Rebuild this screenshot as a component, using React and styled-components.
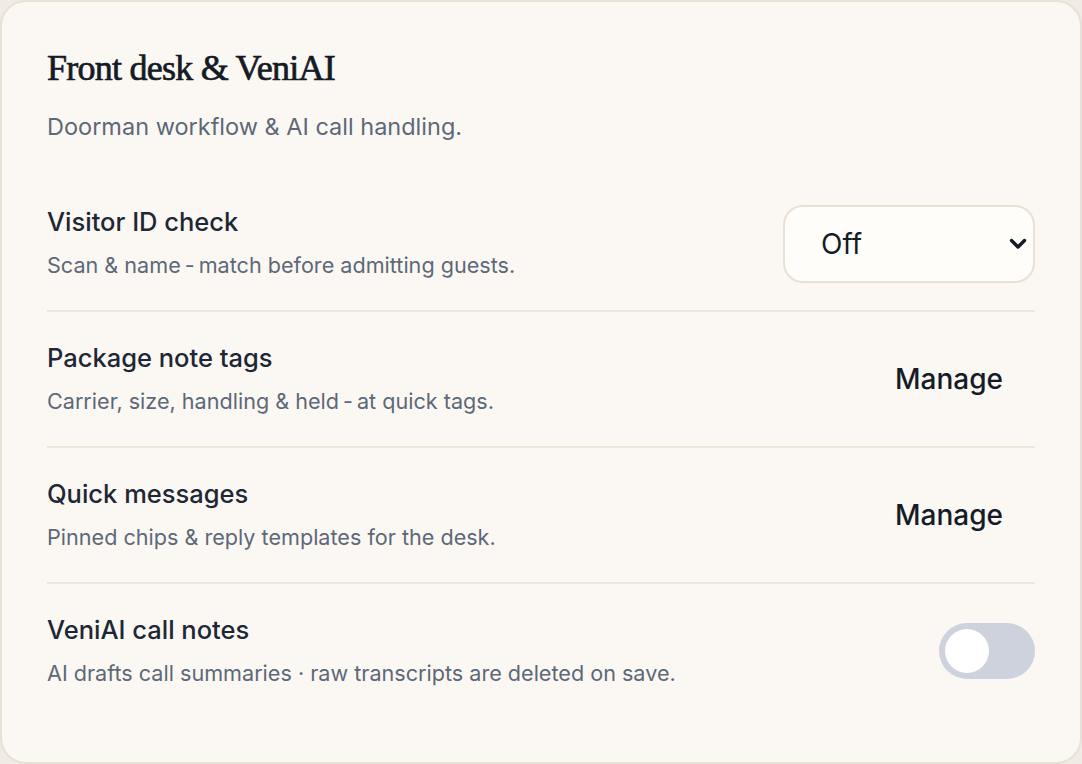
import React, { useState } from "react";
import styled, { createGlobalStyle } from "styled-components";

const Global = createGlobalStyle`
  html, body { margin: 0; padding: 0; background: #f1ece3; }
  body { font-family: Inter, "Noto Sans", sans-serif; -webkit-font-smoothing: antialiased; }
  * { box-sizing: border-box; }
`;

const Card = styled.section`
  width: 1082px;
  height: 764px;
  background: #fbf8f3;
  border: 2px solid #e8e1d5;
  border-radius: 26px;
  padding: 45px 45px 0 45px;
  display: flex;
  flex-direction: column;
`;

const Title = styled.h2`
  margin: 0;
  font-family: "Liberation Serif", "DejaVu Serif", serif;
  font-weight: 400;
  -webkit-text-stroke: 0.7px #141b27;
  font-size: 36px;
  line-height: 42px;
  letter-spacing: -0.75px;
  color: #141b27;
`;

const Subtitle = styled.p`
  margin: 23px 0 0 0;
  font-size: 23.5px;
  line-height: 30px;
  color: #5d6878;
`;

const List = styled.div`
  margin-top: 34px;
  display: flex;
  flex-direction: column;
`;

const Row = styled.div`
  display: flex;
  align-items: center;
  justify-content: space-between;
  padding: 31px 0 31px 0;
  border-bottom: ${(p) => (p.$last ? "none" : "2px solid #ede6db")};
`;

const Info = styled.div`
  display: flex;
  flex-direction: column;
`;

const Label = styled.div`
  font-size: 25.5px;
  font-weight: 500;
  line-height: 30px;
  color: #1e2735;
`;

const Desc = styled.div`
  margin-top: 14px;
  font-size: 21.6px;
  line-height: 28px;
  color: #5d6878;
`;

const Hyphen = styled.span`
  padding: 0 4px;
`;

const SelectWrap = styled.div`
  position: relative;
  width: 252px;
  height: 78px;
  margin: -3px 0 -4px 0;
`;

const Select = styled.select`
  appearance: none;
  -webkit-appearance: none;
  width: 100%;
  height: 100%;
  border: 2px solid #e8e0d3;
  border-radius: 20px;
  background: #fffdf9;
  font-family: Inter, sans-serif;
  font-size: 28px;
  color: #151c28;
  padding: 0 40px 0 36px;
  outline: none;
`;

const Chevron = styled.svg`
  position: absolute;
  right: 8px;
  top: 33px;
  width: 18px;
  height: 12px;
  pointer-events: none;
`;

const ManageButton = styled.button`
  background: transparent;
  border: none;
  font-family: Inter, sans-serif;
  font-size: 28px;
  font-weight: 500;
  color: #151c28;
  padding: 10px 32px 10px 0;
  cursor: pointer;
`;

const Toggle = styled.button`
  width: 96px;
  height: 56px;
  border-radius: 28px;
  border: none;
  padding: 6px;
  background: ${(p) => (p.$on ? "#2f6f5e" : "#cdd2dc")};
  display: flex;
  justify-content: ${(p) => (p.$on ? "flex-end" : "flex-start")};
  cursor: pointer;
`;

const Knob = styled.span`
  width: 44px;
  height: 44px;
  border-radius: 50%;
  background: #ffffff;
`;

export default function App() {
  const [on, setOn] = useState(false);
  return (
    <>
      <Global />
      <Card>
        <Title>Front desk &amp; VeniAI</Title>
        <Subtitle>Doorman workflow &amp; AI call handling.</Subtitle>
        <List>
          <Row>
            <Info>
              <Label>Visitor ID check</Label>
              <Desc>Scan &amp; name<Hyphen>-</Hyphen>match before admitting guests.</Desc>
            </Info>
            <SelectWrap>
              <Select defaultValue="off">
                <option value="off">Off</option>
                <option value="on">On</option>
              </Select>
              <Chevron viewBox="0 0 18 12">
                <path d="M2.5 2.5 L9 9 L15.5 2.5" fill="none" stroke="#141b27" strokeWidth="3.4" strokeLinecap="round" strokeLinejoin="round" />
              </Chevron>
            </SelectWrap>
          </Row>
          <Row>
            <Info>
              <Label>Package note tags</Label>
              <Desc>Carrier, size, handling &amp; held<Hyphen>-</Hyphen>at quick tags.</Desc>
            </Info>
            <ManageButton>Manage</ManageButton>
          </Row>
          <Row>
            <Info>
              <Label>Quick messages</Label>
              <Desc>Pinned chips &amp; reply templates for the desk.</Desc>
            </Info>
            <ManageButton>Manage</ManageButton>
          </Row>
          <Row $last>
            <Info>
              <Label>VeniAI call notes</Label>
              <Desc>AI drafts call summaries · raw transcripts are deleted on save.</Desc>
            </Info>
            <Toggle $on={on} onClick={() => setOn(!on)} aria-label="VeniAI call notes">
              <Knob />
            </Toggle>
          </Row>
        </List>
      </Card>
    </>
  );
}
